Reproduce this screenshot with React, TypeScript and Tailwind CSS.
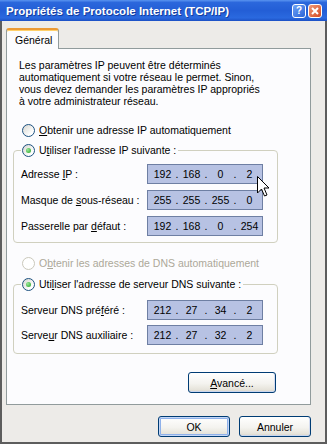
import React from "react";

function Radio({ checked, disabled }: { checked?: boolean; disabled?: boolean }) {
  return (
    <span
      className={
        disabled
          ? "flex h-[13px] w-[13px] shrink-0 items-center justify-center rounded-full border border-[#cac8bb] bg-white"
          : "flex h-[13px] w-[13px] shrink-0 items-center justify-center rounded-full border border-[#1c5180] bg-[linear-gradient(135deg,#d6d5cf,#ffffff_75%)]"
      }
    >
      {checked && (
        <span className="h-[5px] w-[5px] rounded-full bg-[radial-gradient(circle_at_35%_35%,#9ae89a,#21a121)]" />
      )}
    </span>
  );
}

function IpBox({ parts }: { parts: string[] }) {
  return (
    <div className="flex h-[20px] w-[116px] items-center border border-[#6e7fa3] bg-[#b7c2e3] pl-[2px]">
      {parts.map((p, i) => (
        <React.Fragment key={i}>
          {i > 0 && <span className="w-[4px] text-center">.</span>}
          <span className="w-[25px] text-center">{p}</span>
        </React.Fragment>
      ))}
    </div>
  );
}

function Row({ label, parts }: { label: React.ReactNode; parts: string[] }) {
  return (
    <div className="flex h-[20px] items-center">
      <span className="w-[126px] whitespace-nowrap">{label}</span>
      <IpBox parts={parts} />
    </div>
  );
}

function XpButton({ children, main, wide }: { children: React.ReactNode; main?: boolean; wide?: boolean }) {
  if (main) {
    return (
      <button className="flex h-[21px] w-[72px] items-center justify-center rounded-[3px] border border-[#003c74] bg-[linear-gradient(180deg,#ffffff_0%,#f4f3ef_55%,#e6e3da_88%,#d6d0c5_100%)] shadow-[inset_0_0_0_1px_#c4d6f6,inset_0_0_0_2px_#8fb1ea]">
        {children}
      </button>
    );
  }
  return (
    <button
      className={
        wide
          ? "flex h-[21px] w-[88px] items-center justify-center rounded-[3px] border border-[#003c74] bg-[linear-gradient(180deg,#ffffff_0%,#f4f3ef_55%,#e6e3da_88%,#d6d0c5_100%)] shadow-[inset_0_-1px_0_#c9d6ee,inset_-1px_0_0_#d4dcf0]"
          : "flex h-[21px] w-[72px] items-center justify-center rounded-[3px] border border-[#003c74] bg-[linear-gradient(180deg,#ffffff_0%,#f4f3ef_55%,#e6e3da_88%,#d6d0c5_100%)] shadow-[inset_0_-1px_0_#c9d6ee,inset_-1px_0_0_#d4dcf0]"
      }
    >
      {children}
    </button>
  );
}

export default function App() {
  return (
    <div className="relative flex h-[444px] w-[327px] flex-col overflow-hidden bg-[#edebe8] font-['Liberation_Sans',Arial,sans-serif] text-[10.5px] leading-[12px] text-black">
      {/* title bar */}
      <div className="flex h-[21px] shrink-0 items-center bg-[linear-gradient(180deg,#5a94f0_0%,#2b67dc_12%,#235ed6_50%,#2a69df_85%,#1c50c4_100%)] pl-[6px] pr-[5px]">
        <span className="flex-1 whitespace-nowrap text-[11.5px] font-bold text-white [text-shadow:1px_1px_0_#143c9c]">
          Propriétés de Protocole Internet (TCP/IP)
        </span>
        <div className="flex gap-[2px]">
          <div className="flex h-[14px] w-[14px] items-center justify-center rounded-[3px] border border-white bg-[linear-gradient(135deg,#6fa3f6,#2a63d8)] text-[10px] font-bold leading-none text-white">
            ?
          </div>
          <div className="flex h-[14px] w-[14px] items-center justify-center rounded-[3px] border border-white bg-[linear-gradient(135deg,#ef9a78,#d44a22)]">
            <svg width="8" height="8" viewBox="0 0 8 8">
              <path d="M1 1 L7 7 M7 1 L1 7" stroke="white" strokeWidth="2" />
            </svg>
          </div>
        </div>
      </div>

      {/* body */}
      <div className="flex flex-1 flex-col border-x-2 border-b-2 border-[#5d5d5d] px-[4px] pt-[7px]">
        <div className="relative z-10 -mb-px flex h-[21px] w-[53px] items-center rounded-t-[3px] border-x border-t-2 border-[#919b9c] border-t-[#eb9a35] bg-[#fcfcfe] pl-[8px] shadow-[inset_0_1px_0_#ffd06a]">
          Général
        </div>

        <div className="flex h-[357px] w-[305px] flex-col border border-[#919b9c] bg-[#fcfcfe]">
          <p className="ml-[12px] mt-[10px] whitespace-nowrap">
            Les paramètres IP peuvent être déterminés
            <br />
            automatiquement si votre réseau le permet. Sinon,
            <br />
            vous devez demander les paramètres IP appropriés
            <br />à votre administrateur réseau.
          </p>

          <div className="ml-[15px] mt-[16px] flex h-[14px] items-center gap-[4px]">
            <Radio />
            <span>
              <u>O</u>btenir une adresse IP automatiquement
            </span>
          </div>

          <fieldset className="ml-[6px] mt-[6px] w-[265px] rounded-[4px] border border-[#d0d0bf] pb-[6px]">
            <legend className="ml-[7px] px-[1px]">
              <span className="flex h-[14px] items-center gap-[4px] pr-[1px]">
                <Radio checked />
                <span>
                  U<u>t</u>iliser l'adresse IP suivante :
                </span>
              </span>
            </legend>
            <div className="mt-[7px] flex flex-col gap-[6px] pl-[7px]">
              <Row label={<>Adresse <u>I</u>P :</>} parts={["192", "168", "0", "2"]} />
              <Row label={<>Masque de <u>s</u>ous-réseau :</>} parts={["255", "255", "255", "0"]} />
              <Row label={<>Passerelle par <u>d</u>éfaut :</>} parts={["192", "168", "0", "254"]} />
            </div>
          </fieldset>

          <div className="ml-[15px] mt-[13px] flex h-[14px] items-center gap-[4px] text-[#aca899]">
            <Radio disabled />
            <span>
              O<u>b</u>tenir les adresses de DNS automatiquement
            </span>
          </div>

          <fieldset className="ml-[6px] mt-[7px] w-[265px] rounded-[4px] border border-[#d0d0bf] pb-[8px]">
            <legend className="ml-[7px] px-[1px]">
              <span className="flex h-[14px] items-center gap-[4px] pr-[1px]">
                <Radio checked />
                <span>
                  Uti<u>l</u>iser l'adresse de serveur DNS suivante :
                </span>
              </span>
            </legend>
            <div className="mt-[9px] flex flex-col gap-[5px] pl-[7px]">
              <Row label={<>Serveur DNS pré<u>f</u>éré :</>} parts={["212", "27", "34", "2"]} />
              <Row label={<>Serve<u>u</u>r DNS auxiliaire :</>} parts={["212", "27", "32", "2"]} />
            </div>
          </fieldset>

          <div className="mr-[34px] mt-[18px] self-end">
            <XpButton wide>
              <span>
                <u>A</u>vancé...
              </span>
            </XpButton>
          </div>
        </div>

        <div className="ml-[152px] mt-[11px] flex gap-[9px]">
          <XpButton main>OK</XpButton>
          <XpButton>Annuler</XpButton>
        </div>
      </div>

      {/* mouse pointer */}
      <svg className="absolute left-[257px] top-[176px]" width="13" height="21" viewBox="0 0 13 21">
        <path d="M0.5 0.5 L0.5 17 L4.5 13 L7.5 20 L10 19 L7 12 L12 12 Z" fill="white" stroke="black" strokeWidth="1" />
      </svg>
    </div>
  );
}
